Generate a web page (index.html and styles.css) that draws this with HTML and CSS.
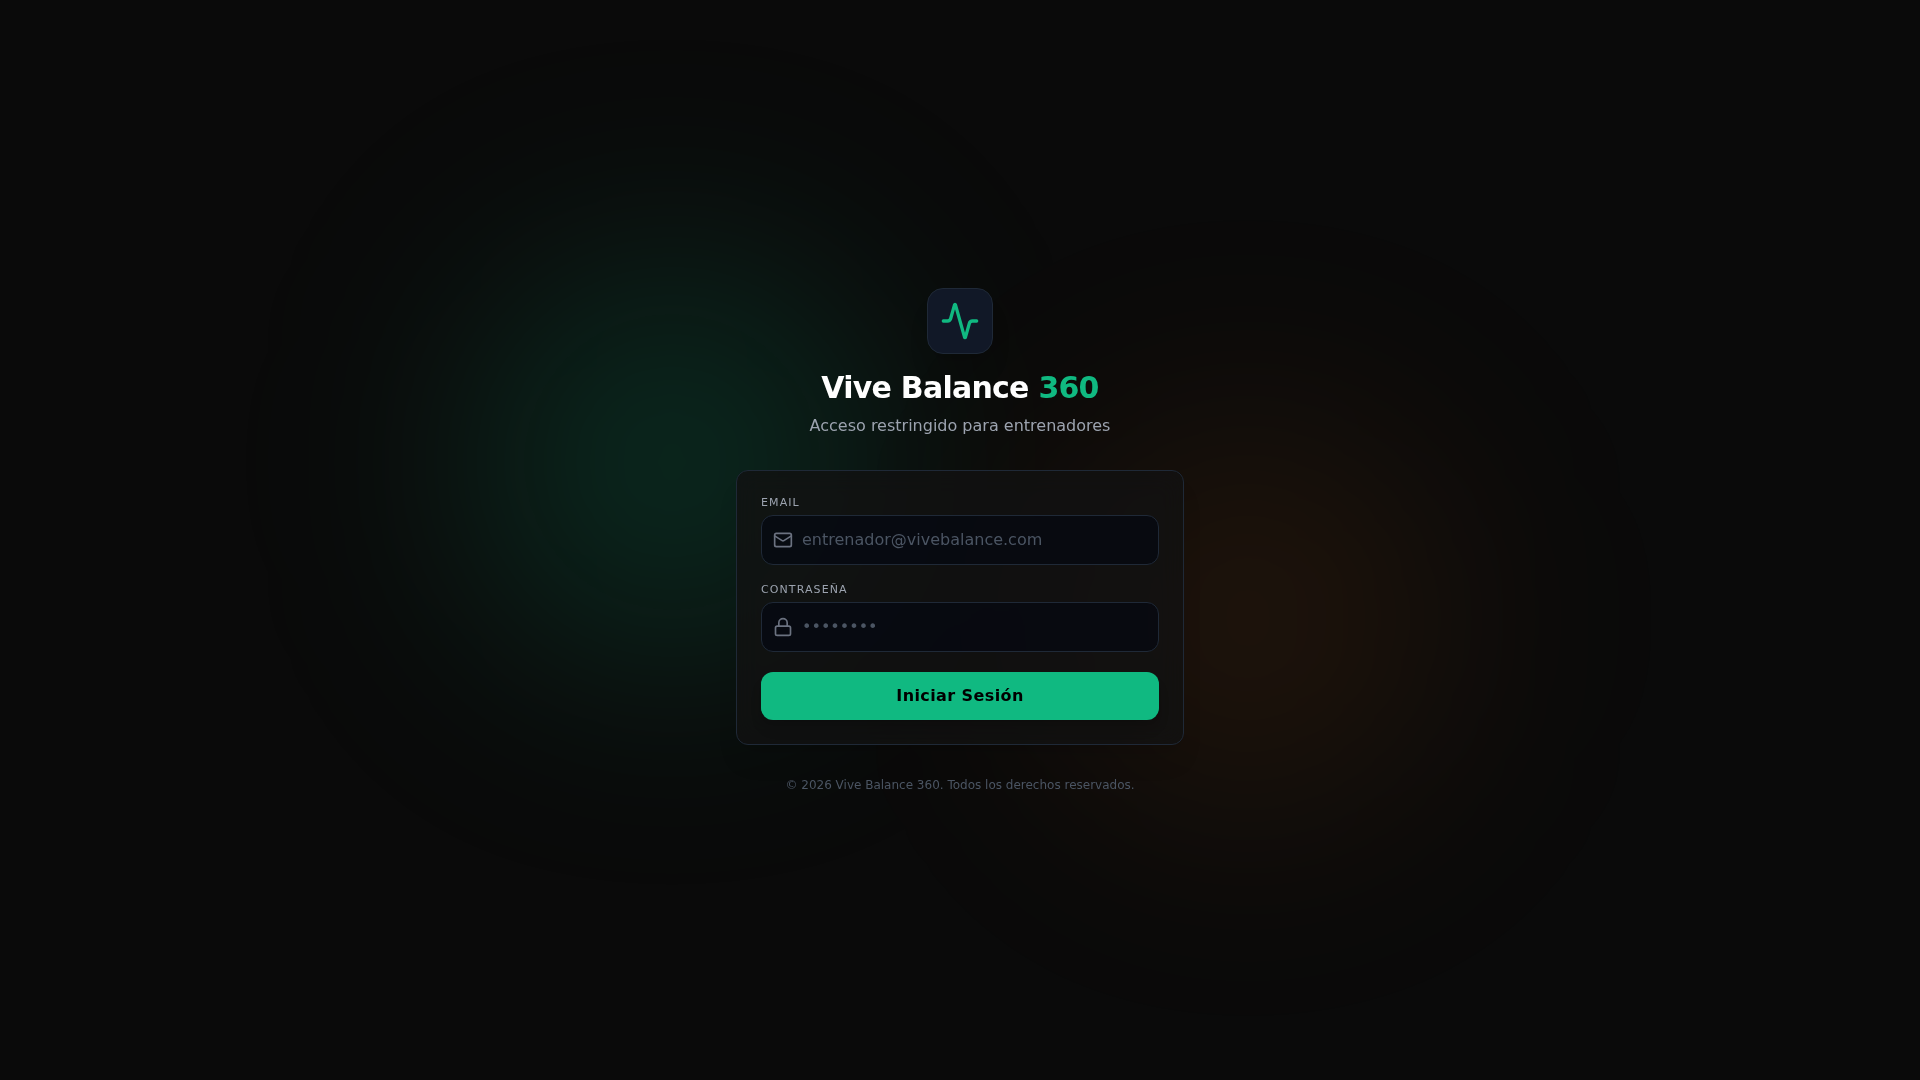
FILE: index.html
```html
<!DOCTYPE html>
<html lang="es">
<head>
  <meta charset="utf-8">
  <meta name="viewport" content="width=device-width, initial-scale=1">
  <title>Vive Balance 360</title>
  <link rel="stylesheet" href="styles.css">
</head>
<body>
  <div class="backdrop" aria-hidden="true">
    <div class="glow glow-green"></div>
    <div class="glow glow-orange"></div>
  </div>
  <main class="login">
    <header class="brand">
      <div class="logo">
        <svg class="logo-icon" viewBox="0 0 24 24" aria-hidden="true"><path d="M22 12h-2.480a2 2 0 0 0-1.930 1.460l-2.350 8.360a.250.250 0 0 1-.480 0L9.240 2.180a.250.250 0 0 0-.480 0l-2.350 8.360A2 2 0 0 1 4.490 12H2"/></svg>
      </div>
      <h1 class="title">Vive Balance <span class="accent">360</span></h1>
      <p class="subtitle">Acceso restringido para entrenadores</p>
    </header>
    <form class="card">
      <div class="field">
        <label class="label" for="email">Email</label>
        <div class="control">
          <svg class="control-icon" viewBox="0 0 24 24" aria-hidden="true"><rect width="20" height="16" x="2" y="4" rx="2"/><path d="m22 7-8.970 5.700a1.940 1.940 0 0 1-2.060 0L2 7"/></svg>
          <input class="input" id="email" type="email" placeholder="entrenador@vivebalance.com">
        </div>
      </div>
      <div class="field">
        <label class="label" for="password">Contraseña</label>
        <div class="control">
          <svg class="control-icon" viewBox="0 0 24 24" aria-hidden="true"><rect width="18" height="11" x="3" y="11" rx="2" ry="2"/><path d="M7 11V7a5 5 0 0 1 10 0v4"/></svg>
          <input class="input" id="password" type="password" placeholder="••••••••">
        </div>
      </div>
      <button class="submit" type="submit">Iniciar Sesión</button>
    </form>
    <footer class="footer">© 2026 Vive Balance 360. Todos los derechos reservados.</footer>
  </main>
</body>
</html>
```
FILE: styles.css
```css
*,
*::before,
*::after {
  box-sizing: border-box;
}

body {
  margin: 0;
  min-height: 100vh;
  display: flex;
  align-items: center;
  justify-content: center;
  padding: 16px;
  background: #0a0a0a;
  color: #fff;
  font-family: "DejaVu Sans", sans-serif;
  font-size: 16px;
  line-height: 24px;
}

/* Blurred colour glows behind the form */
.backdrop {
  position: fixed;
  inset: 0;
  overflow: hidden;
  pointer-events: none;
}

.glow {
  position: absolute;
  width: 384px;
  height: 384px;
  border-radius: 50%;
}

.glow-green {
  top: 25%;
  left: 25%;
  background: rgba(16, 185, 129, 0.2);
  filter: blur(120px);
}

.glow-orange {
  right: 25%;
  bottom: 25%;
  background: rgba(249, 115, 22, 0.1);
  filter: blur(120px);
}

.login {
  position: relative;
  width: 100%;
  max-width: 448px;
  display: flex;
  flex-direction: column;
  gap: 32px;
}

.brand {
  display: flex;
  flex-direction: column;
  align-items: center;
  text-align: center;
}

.logo {
  display: flex;
  padding: 12px;
  margin-bottom: 16px;
  border: 1px solid #1f2937;
  border-radius: 16px;
  background: #111827;
  box-shadow: 0 20px 25px -5px rgba(0, 0, 0, 0.1), 0 8px 10px -6px rgba(0, 0, 0, 0.1);
}

.logo-icon,
.control-icon {
  fill: none;
  stroke: currentColor;
  stroke-width: 2;
  stroke-linecap: round;
  stroke-linejoin: round;
}

.logo-icon {
  width: 40px;
  height: 40px;
  color: #10b981;
}

.title {
  margin: 0 0 8px;
  font-size: 30px;
  line-height: 36px;
  font-weight: 700;
  letter-spacing: -0.025em;
}

.accent {
  color: #10b981;
}

.subtitle {
  margin: 0;
  color: #9ca3af;
}

.card {
  display: flex;
  flex-direction: column;
  gap: 17px;
  padding: 24px;
  border: 1px solid #1f2937;
  border-radius: 12px;
  background: rgba(18, 18, 18, 0.8);
  backdrop-filter: blur(12px);
  box-shadow: 0 20px 25px -5px rgba(0, 0, 0, 0.1), 0 8px 10px -6px rgba(0, 0, 0, 0.1);
}

.field {
  display: flex;
  flex-direction: column;
  gap: 4px;
}

.label {
  color: #9ca3af;
  font-size: 11px;
  line-height: 16px;
  letter-spacing: 0.1em;
  text-transform: uppercase;
}

.control {
  position: relative;
  display: flex;
  align-items: center;
}

.control-icon {
  position: absolute;
  left: 12px;
  width: 20px;
  height: 20px;
  color: #6b7280;
}

.input {
  width: 100%;
  height: 50px;
  padding: 12px 16px 12px 40px;
  border: 1px solid #1f2937;
  border-radius: 12px;
  background: rgba(3, 7, 18, 0.6);
  color: #fff;
  font: inherit;
}

.input::placeholder {
  color: #4b5563;
  opacity: 1;
}

.submit {
  height: 48px;
  margin-top: 3px;
  border: 0;
  border-radius: 12px;
  background: #10b981;
  color: #000;
  font: inherit;
  font-weight: 700;
  letter-spacing: 0.025em;
  cursor: pointer;
  box-shadow: 0 10px 15px -3px rgba(0, 0, 0, 0.1), 0 4px 6px -4px rgba(0, 0, 0, 0.1);
}

.footer {
  color: #4b5563;
  font-size: 12px;
  line-height: 16px;
  text-align: center;
}
```
